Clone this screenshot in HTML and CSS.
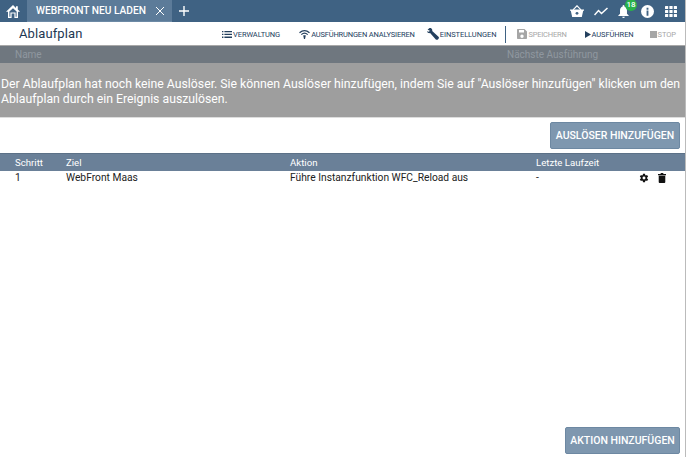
FILE: index.html
```html
<!DOCTYPE html>
<html lang="de">
<head>
<meta charset="utf-8">
<title>Ablaufplan</title>
<link rel="stylesheet" href="styles.css">
</head>
<body>
<div class="app">
  <header class="topbar">
    <div class="home">
      <svg width="14" height="13" viewBox="0 0 14 13"><path fill="#fff" d="M7 0 0 6.800h2V13h3.600V8.600h2.800V13H12V6.800h2L11.800 4.600V1.200H10v1.700z"/><path fill="#3f6283" d="M7 3.200 3.400 6.600V11.800h1V7.400h5.200v4.400h1V6.600z"/></svg>
    </div>
    <div class="tab">
      <span class="tab-label">WEBFRONT NEU LADEN</span>
      <svg class="tab-x" width="10" height="10" viewBox="0 0 10 10"><path stroke="#fff" stroke-width="1" d="M1 1l8 8M9 1l-8 8"/></svg>
    </div>
    <svg class="plus" width="10" height="10" viewBox="0 0 10 10"><path stroke="#fff" stroke-width="1.400" d="M5 0v10M0 5h10"/></svg>
    <div class="top-icons">
      <svg class="ti-basket" width="14" height="12" viewBox="0 0 14 12"><path fill="#fff" d="M0 4.500h14v1.300h-.8L11.800 12H2.200L.8 5.800H0z"/><path fill="none" stroke="#fff" stroke-width="1.200" d="M3 4.800 7 .8l4 4"/><circle cx="7" cy="8.300" r="1.400" fill="#3f6283"/></svg>
      <svg class="ti-chart" width="14" height="9" viewBox="0 0 14 9"><path fill="none" stroke="#fff" stroke-width="1.500" d="M.5 8 4.500 3.500 7.500 6.500 13.500 1"/></svg>
      <span class="bell">
        <svg width="11" height="13" viewBox="0 0 12 15"><path fill="#fff" d="M6 0c.6 0 1 .4 1 1v.7C9 2.200 10 4 10 6v4l2 2v.8H0V12l2-2V6c0-2 1-3.800 3-4.300V1c0-.6.400-1 1-1zM4.500 13.500h3a1.500 1.500 0 0 1-3 0z"/></svg>
        <span class="badge">18</span>
      </span>
      <svg class="ti-info" width="13" height="13" viewBox="0 0 14 14"><circle cx="7" cy="7" r="7" fill="#fff"/><path fill="#3f6283" d="M6 3h2v2H6zM6 6h2v5.500H6z"/></svg>
      <svg class="grid-icon" width="12" height="11" viewBox="0 0 12 11"><g fill="#fff"><rect width="3.200" height="3" rx=".5"/><rect x="4.400" width="3.200" height="3" rx=".5"/><rect x="8.800" width="3.200" height="3" rx=".5"/><rect y="4" width="3.200" height="3" rx=".5"/><rect x="4.400" y="4" width="3.200" height="3" rx=".5"/><rect x="8.800" y="4" width="3.200" height="3" rx=".5"/><rect y="8" width="3.200" height="3" rx=".5"/><rect x="4.400" y="8" width="3.200" height="3" rx=".5"/><rect x="8.800" y="8" width="3.200" height="3" rx=".5"/></g></svg>
    </div>
  </header>

  <div class="main">
    <div class="toolbar">
      <h1 class="title">Ablaufplan</h1>
      <div class="actions">
        <span class="action a-verwaltung">
          <svg width="10" height="7" viewBox="0 0 10 7"><path fill="#24405e" d="M0 0h1.400v1.300H0zM2.400 0H10v1.300H2.400zM0 2.800h1.400v1.300H0zM2.400 2.800H10v1.300H2.400zM0 5.600h1.400v1.300H0zM2.400 5.600H10v1.300H2.400z"/></svg>VERWALTUNG
        </span>
        <span class="action a-analyse">
          <svg width="11" height="9" viewBox="0 0 11 9"><path fill="none" stroke="#24405e" stroke-width="1.200" d="M.5 2.800C3.500.3 7.500.3 10.500 2.800M2.300 4.600c2-1.700 4.400-1.700 6.400 0"/><path fill="#24405e" d="M4.200 5.500c.8-.5 1.800-.5 2.600 0L6 9H5z"/></svg>AUSFÜHRUNGEN ANALYSIEREN
        </span>
        <span class="action a-settings">
          <svg width="12" height="12" viewBox="0 0 12 12"><path fill="#24405e" d="M.6 1.700 2.200.2C3.500-.3 4.900.4 5.200 1.700c.1.500.1 1 0 1.300l6.300 5.700c.6.600.6 1.500 0 2.100l-.6.600c-.6.600-1.500.6-2.100 0L3.100 5.100C1.700 5.500.3 4.600 0 3.200L1.900 3.700l1-1z"/></svg>EINSTELLUNGEN
        </span>
        <span class="divider"></span>
        <span class="action a-save muted">
          <svg width="10" height="10" viewBox="0 0 10 10"><path fill="#a6a6a6" d="M0 1c0-.6.400-1 1-1h6.500L10 2.500V9c0 .6-.4 1-1 1H1c-.6 0-1-.4-1-1zM2 1v2.500h5V1zM5 5.500a1.700 1.700 0 1 0 0 3.400 1.700 1.700 0 0 0 0-3.400z"/></svg>SPEICHERN
        </span>
        <span class="action a-run">
          <svg width="6" height="7" viewBox="0 0 6 7"><path fill="#24405e" d="M0 0l6 3.500L0 7z"/></svg>AUSFÜHREN
        </span>
        <span class="action a-stop muted">
          <svg width="7" height="7" viewBox="0 0 7 7"><path fill="#a6a6a6" d="M0 0h7v7H0z"/></svg>STOP
        </span>
      </div>
    </div>

    <div class="trigger-head">
      <span class="th-name">Name</span>
      <span class="th-next">Nächste Ausführung</span>
    </div>
    <div class="notice">Der Ablaufplan hat noch keine Auslöser. Sie können Auslöser hinzufügen, indem Sie auf "Auslöser hinzufügen" klicken um den Ablaufplan durch ein Ereignis auszulösen.</div>
    <div class="btn-row"><button class="btn btn-trigger">AUSLÖSER HINZUFÜGEN</button></div>

    <div class="grid-row grid-head">
      <span>Schritt</span><span>Ziel</span><span>Aktion</span><span>Letzte Laufzeit</span><span></span>
    </div>
    <div class="grid-row grid-body">
      <span>1</span><span>WebFront Maas</span><span>Führe Instanzfunktion WFC_Reload aus</span><span>-</span>
      <span class="row-icons">
        <svg width="10" height="10" viewBox="0 0 24 24"><path fill="#111" d="M19.400 13c.1-.3.1-.7.1-1s0-.7-.1-1l2.500-1.900-2.500-4.300-2.900 1.200c-.5-.4-1.100-.8-1.700-1L14.500 2h-5l-.4 3c-.6.200-1.200.6-1.700 1L4.500 4.800 2 9.100 4.500 11c-.1.300-.1.700-.1 1s0 .7.100 1L2 14.900l2.500 4.300 2.900-1.200c.5.400 1.100.8 1.700 1l.4 3h5l.4-3c.6-.2 1.200-.6 1.700-1l2.900 1.200 2.500-4.300zM12 15.500a3.500 3.500 0 1 1 0-7 3.500 3.500 0 0 1 0 7z"/></svg>
        <svg width="8" height="10" viewBox="0 0 9 11"><path fill="#111" d="M0 1h2.800l.4-1h2.600l.4 1H9v1.300H0zM.8 3h7.400v7c0 .6-.4 1-1 1H1.800c-.6 0-1-.4-1-1z"/></svg>
      </span>
    </div>
    <div class="spacer"></div>
    <div class="btn-row-bottom"><button class="btn btn-action">AKTION HINZUFÜGEN</button></div>
  </div>
</div>
</body>
</html>
```
FILE: styles.css
```css
* { box-sizing: border-box; }
html, body { margin: 0; height: 100%; overflow: hidden; background: #fff; }
body { font-family: Roboto, "Liberation Sans", sans-serif; }
.app { display: flex; flex-direction: column; height: 457px; width: 686px; border-right: 1px solid #bbb; }

.topbar { height: 22px; background: #3f6283; display: flex; align-items: center; color: #fff; flex: none; }
.home { width: 27px; padding-left: 6px; display: flex; }
.tab { width: 145px; height: 22px; background: #5c7b99; display: flex; align-items: center; padding-left: 9px; border-bottom: 1px solid #6d8aa6; }
.tab-label { font-size: 10.200px; font-weight: 500; width: 119px; white-space: nowrap; }
.plus { margin-left: 7px; }
.top-icons { margin-left: auto; display: flex; align-items: center; padding-right: 8px; }
.top-icons > * { flex: none; }
.ti-basket { margin-right: 10px; }
.ti-chart { margin-right: 10px; }
.bell { position: relative; display: flex; margin-right: 12px; }
.badge { position: absolute; left: 7px; top: -6px; width: 12px; height: 12px; border-radius: 50%; background: #2ab24a; font-size: 8px; line-height: 12px; text-align: center; font-weight: 500; }
.grid-icon { margin-left: 11px; }

.main { flex: 1; display: flex; flex-direction: column; min-height: 0; }
.toolbar { height: 23px; display: flex; align-items: center; flex: none; }
.title { margin: 0 0 0 19px; font-size: 13px; font-weight: 400; color: #1d3752; letter-spacing: .1px; }
.actions { margin-left: auto; display: flex; align-items: center; font-size: 7.500px; color: #24405e; font-weight: 400; padding-top: 1px; letter-spacing: -.08px; }
.action { display: flex; align-items: center; white-space: nowrap; }
.action svg { margin-right: 1px; }
.muted { color: #a6a6a6; }
.a-verwaltung { margin-right: 19px; }
.a-analyse { margin-right: 12px; letter-spacing: -.17px; }
.a-settings { margin-right: 9px; }
.divider { width: 1px; height: 17px; background: #3f6283; margin-right: 11px; }
.a-save { margin-right: 18px; letter-spacing: -.2px; }
.a-run { margin-right: 16px; }
.a-stop { margin-right: 9px; }

.trigger-head { height: 18px; background: #6f777f; color: #8f979f; font-size: 10px; display: flex; align-items: center; flex: none; border-top: 1px solid #a8a8a8; }
.th-name { margin-left: 15px; width: 492px; }

.notice { height: 55px; background: #9e9e9e; color: #fff; font-size: 12.250px; line-height: 15px; padding: 14px 4px 0 1px; flex: none; border-bottom: 1px solid #ddd; }

.btn-row { height: 35px; display: flex; justify-content: flex-end; align-items: flex-start; padding: 4px 5px 0 0; flex: none; }
.btn { background: #7e97af; color: #fff; border: 1px solid #6d88a2; border-radius: 2px; font-family: inherit; font-size: 10.500px; font-weight: 500; height: 27px; padding: 0; }
.btn-trigger { width: 130px; }
.btn-action { width: 115px; }

.grid-row { display: grid; grid-template-columns: 66px 224px 246px 103px 46px; font-size: 10.250px; align-items: center; flex: none; }
.grid-row > span:first-child { padding-left: 15px; }
.grid-head { height: 18px; background: #6a8098; color: #fff; border-top: 1px solid #5c7187; font-size: 9.650px; }
.grid-body { height: 13px; color: #222; }
.row-icons { display: flex; gap: 9px; align-items: center; }
.spacer { flex: 1; }
.btn-row-bottom { display: flex; justify-content: flex-end; padding: 0 5px 3px 0; flex: none; }
```
